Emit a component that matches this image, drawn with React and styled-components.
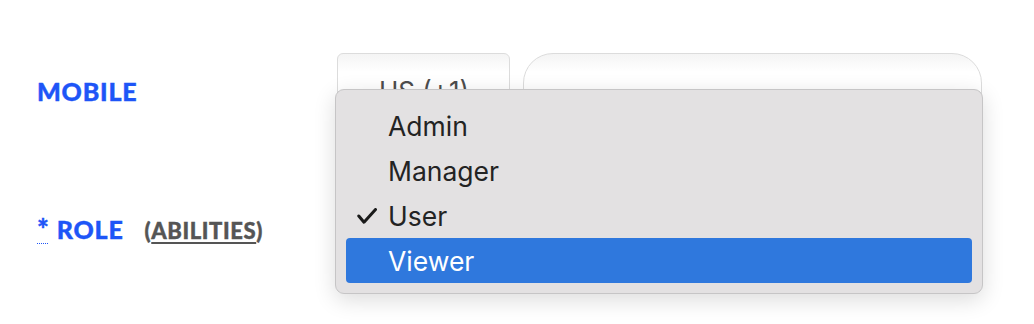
import styled, { createGlobalStyle } from 'styled-components';

const GlobalStyle = createGlobalStyle`
  body {
    margin: 0;
    background: #fff;
    min-height: 100vh;
  }
`;

const Form = styled.div`
  display: flex;
  flex-direction: column;
  gap: 61px;
  padding: 53px 0 60px 37px;
`;

const Row = styled.div`
  display: grid;
  grid-template-columns: 300px 645px;
  align-items: center;
  height: 76px;
`;

const Label = styled.div`
  display: flex;
  align-items: baseline;
  gap: 21px;
  font-family: Lato, 'Noto Sans', sans-serif;
  font-weight: 900;
  font-size: 25px;
  color: #1e55f7;
  letter-spacing: 0.8px;
  -webkit-text-stroke: 0.4px #1e55f7;
`;

const Required = styled.abbr`
  text-decoration: underline dotted;
  text-underline-offset: 4px;
  text-decoration-thickness: 1px;
  margin-right: 7px;
  font-size: 28px;
`;

const Abilities = styled.span`
  font-size: 22px;
  color: #555;
  letter-spacing: 0.6px;
  -webkit-text-stroke: 0.4px #555;
`;

const AbilitiesLink = styled.a`
  color: inherit;
  text-decoration: underline;
  text-underline-offset: 3px;
  text-decoration-thickness: 2px;
`;

const Field = styled.div`
  position: relative;
  display: flex;
  gap: 13px;
  height: 100%;
`;

const Box = styled.div`
  box-sizing: border-box;
  height: 100%;
  border: 1px solid #dcdcdc;
  background: linear-gradient(#f4f4f4, #fff 18px);
  border-radius: ${(p) => p.$radius}px;
  width: ${(p) => p.$width};
  flex: ${(p) => (p.$grow ? 1 : 'none')};
  padding: 21px 0 0 41px;
  font-family: Inter, 'Liberation Sans', sans-serif;
  font-size: 26px;
  color: #4d4d4d;
  overflow: hidden;
  white-space: nowrap;
`;

const Menu = styled.ul`
  position: absolute;
  left: -2px;
  top: -101px;
  box-sizing: border-box;
  width: 648px;
  height: 205px;
  margin: 0;
  padding: 13px 10px;
  list-style: none;
  background: #e3e1e2;
  border: 1px solid #c6c5c6;
  border-radius: 9px;
  box-shadow: 0 6px 22px rgba(0, 0, 0, 0.14);
`;

const Item = styled.li`
  position: relative;
  display: flex;
  align-items: center;
  height: 45px;
  padding-left: 42px;
  border-radius: 4px;
  font-family: Inter, 'Liberation Sans', sans-serif;
  font-size: 26.5px;
  color: ${(p) => (p.$active ? '#fff' : '#232323')};
  background: ${(p) => (p.$active ? '#2f78dd' : 'transparent')};
`;

const Check = styled.svg`
  position: absolute;
  left: 11px;
  top: 15px;
  width: 20px;
  height: 16px;
`;

const roles = ['Admin', 'Manager', 'User', 'Viewer'];

export default function App() {
  return (
    <>
      <GlobalStyle />
      <Form>
        <Row>
          <Label>MOBILE</Label>
          <Field>
            <Box $radius={6} $width="173px">US (+1)</Box>
            <Box $radius={30} $grow />
          </Field>
        </Row>
        <Row>
          <Label>
            <span>
              <Required title="required">*</Required>ROLE
            </span>
            <Abilities>
              (<AbilitiesLink href="#">ABILITIES</AbilitiesLink>)
            </Abilities>
          </Label>
          <Field>
            <Box $radius={6} $grow />
            <Menu>
              {roles.map((r) => (
                <Item key={r} $active={r === 'Viewer'}>
                  {r === 'User' && (
                    <Check viewBox="0 0 20 16">
                      <path d="M1.8 8 L7 14.2 L18.5 1.5" fill="none" stroke="#1a1a1a" strokeWidth="3" strokeLinecap="round" strokeLinejoin="round" />
                    </Check>
                  )}
                  {r}
                </Item>
              ))}
            </Menu>
          </Field>
        </Row>
      </Form>
    </>
  );
}
